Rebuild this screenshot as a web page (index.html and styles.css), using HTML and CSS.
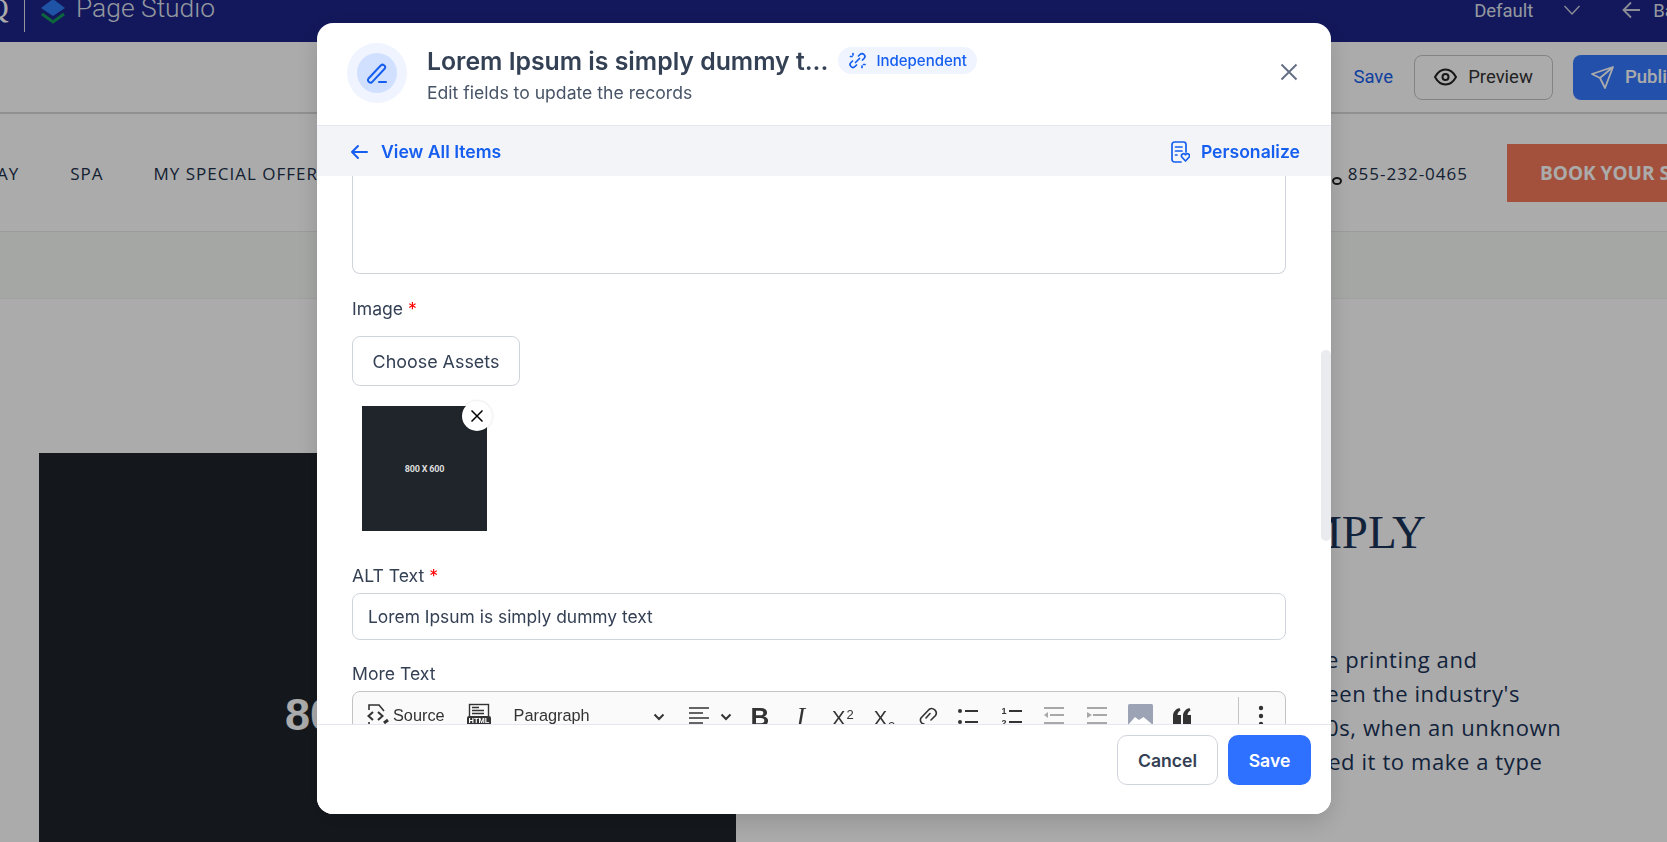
FILE: index.html
```html
<!DOCTYPE html>
<html>

<head>
    <meta charset="utf-8">
    <title>Page Studio</title>
    <link rel="stylesheet" href="styles.css">
</head>

<body>
    <div class="page">
        <div class="topbar">
            <div class="topbar-left">
                <span class="brand-q">Q</span>
                <span class="divider"></span>
                <svg class="logo" width="28" height="28" viewBox="0 0 28 28">
                    <path d="M14 2 L26 11 L14 19 L2 11 Z" fill="#2f7cf6" />
                    <path d="M3 17 L14 25 L25 17" fill="none" stroke="#129a5a" stroke-width="3" />
                </svg>
                <span class="brand-name">Page Studio</span>
            </div>
            <div class="topbar-right">
                <span>Default</span>
                <svg class="chev" width="16" height="16" viewBox="0 0 16 16" fill="none" stroke="#cfd3e0" stroke-width="1.4">
                    <path d="M0.500 3 L8 11 L15.500 3" />
                </svg>
                <svg class="back" width="20" height="20" viewBox="0 0 20 20" fill="none" stroke="#cfd3e0" stroke-width="1.8">
                    <path d="M19 10 H3 M10 2.500 L2.500 10 L10 17.500" />
                </svg>
                <span>Back</span>
            </div>
        </div>

        <div class="actionbar">
            <a class="save-link">Save</a>
            <button class="preview-btn">
                <svg width="23" height="18" viewBox="0 0 23 18" fill="none" stroke="#222" stroke-width="2">
                    <path d="M1 9 C4 3.500 7.500 1.500 11.500 1.500 C15.500 1.500 19 3.500 22 9 C19 14.500 15.500 16.500 11.500 16.500 C7.500 16.500 4 14.500 1 9 Z" />
                    <circle cx="11.500" cy="9" r="3" />
                </svg>
                Preview
            </button>
            <button class="publish-btn">
                <svg width="24" height="24" viewBox="0 0 24 24" fill="none" stroke="#fff" stroke-width="1.8" stroke-linejoin="round">
                    <path d="M23 2 L2 9 L10 13 L15 23 Z M23 2 L10 13" />
                </svg>
                Publish
            </button>
        </div>

        <div class="sitenav">
            <span class="nav-item nav-first">AY</span>
            <span class="nav-item nav-spa">SPA</span>
            <span class="nav-item nav-offer">MY SPECIAL OFFERS</span>
            <span class="nav-spacer"></span>
            <svg class="phone" width="18" height="28" viewBox="0 0 18 28" fill="none" stroke="#222" stroke-width="2">
                <ellipse cx="7" cy="21" rx="4" ry="3" />
            </svg>
            <span class="nav-phone">855-232-0465</span>
            <span class="book">BOOK YOUR STAY</span>
        </div>

        <div class="subbar"></div>

        <div class="hero">
            <div class="hero-img">
                <span>800 X 600</span>
            </div>
            <div class="hero-text">
                <h2>LOREM IPSUM IS SIMPLY</h2>
                <p>Lorem Ipsum is simply dummy text of the printing and<br>
                    typesetting industry. Lorem Ipsum has been the industry's<br>
                    standard dummy text ever since the 1500s, when an unknown<br>
                    printer took a galley of type and scrambled it to make a type</p>
            </div>
        </div>
    </div>

    <div class="overlay"></div>

    <div class="modal">
        <div class="modal-head">
            <div class="head-icon">
                <div class="head-icon-in">
                    <svg width="24" height="24" viewBox="0 0 24 24" fill="none" stroke="#155eef" stroke-width="2" stroke-linecap="round" stroke-linejoin="round">
                        <path d="M3.500 17.500 L15.500 4.800 A2.400 2.400 0 0 1 19.600 7.800 L7.500 20.600 A2.500 2.500 0 0 1 3.500 17.500 Z" />
                        <path d="M14 21 H21" />
                    </svg>
                </div>
            </div>
            <div class="head-text">
                <div class="head-title">
                    <h1>Lorem Ipsum is simply dummy t...</h1>
                    <span class="badge">
                        <svg width="17" height="17" viewBox="0 0 17 17" fill="none" stroke="#155eef" stroke-width="1.700" stroke-linecap="round">
                            <path d="M9.500 4 L11 2.500 A2.800 2.800 0 0 1 15 6.500 L13.500 8 M7.500 13 L6 14.500 A2.800 2.800 0 0 1 2 10.500 L3.500 9" />
                            <path d="M6.500 10.500 L10.500 6.500" />
                            <path d="M4 1.500 V3 M1.500 4.500 H3 M13 14 V15.500 M14.500 12.500 H16" />
                        </svg>
                        Independent
                    </span>
                </div>
                <p>Edit fields to update the records</p>
            </div>
            <svg class="close" width="20" height="20" viewBox="0 0 20 20" fill="none" stroke="#667085" stroke-width="2">
                <path d="M2.500 2.500 L17.500 17.500 M17.500 2.500 L2.500 17.500" />
            </svg>
        </div>

        <div class="modal-sub">
            <a class="sub-link">
                <svg width="20" height="20" viewBox="0 0 20 20" fill="none" stroke="#155eef" stroke-width="2" stroke-linecap="round" stroke-linejoin="round">
                    <path d="M18 10 H3 M9 4 L3 10 L9 16" />
                </svg>
                <span class="sub-gap sub-gap-wide">View All Items</span>
            </a>
            <a class="sub-link">
                <svg width="20" height="24" viewBox="-1 0 20 24" fill="none" stroke="#155eef" stroke-width="1.700" stroke-linecap="round" stroke-linejoin="round">
                    <path d="M15 12 V4.500 A2.500 2.500 0 0 0 12.500 2 H3.500 A2.500 2.500 0 0 0 1 4.500 V19.500 A2.500 2.500 0 0 0 3.500 22 H10" />
                    <path d="M4.500 7 H11 M4.500 11 H11 M4.500 15 H6" />
                    <path d="M14.500 21 L10.800 17 A2 2 0 0 1 14.500 14.800 A2 2 0 0 1 18.200 17 Z" />
                </svg>
                <span class="sub-gap">Personalize</span>
            </a>
        </div>

        <div class="modal-body">
            <div class="textarea-end"></div>

            <label class="field-label label-image">Image <em>*</em></label>
            <button class="choose-btn">Choose Assets</button>
            <div class="thumb">
                <span class="thumb-text">800 X 600</span>
                <span class="thumb-x">
                    <svg width="14" height="14" viewBox="0 0 14 14" fill="none" stroke="#000" stroke-width="1.500">
                        <path d="M1.500 1.500 L12.500 12.500 M12.500 1.500 L1.500 12.500" />
                    </svg>
                </span>
            </div>

            <label class="field-label label-alt">ALT Text <em>*</em></label>
            <div class="text-input">Lorem Ipsum is simply dummy text</div>

            <label class="field-label label-more">More Text</label>
            <div class="editor">
                <div class="tool tool-source">
                    <svg width="24" height="24" viewBox="0 0 24 24" fill="none" stroke="#333" stroke-width="1.600">
                        <path d="M3 7 V2 H13 L18 8" />
                        <path d="M7 9 L2.500 13 L7 17 M12 9 L16.500 13 L12 17" stroke-width="2" />
                        <path d="M3 19 V22 H15" />
                        <path d="M18 20 L22 17" stroke-width="3" />
                    </svg>
                    <span>Source</span>
                </div>
                <div class="tool tool-html">
                    <svg width="26" height="24" viewBox="0 0 26 24" fill="none" stroke="#333" stroke-width="1.400">
                        <rect x="3.500" y="1.500" width="19" height="13" />
                        <path d="M6 4.500 H13 M6 7.500 H18 M6 10.500 H18" />
                        <rect x="1" y="13" width="24" height="10" rx="2" fill="#333" stroke="none" />
                        <text x="13" y="20" class="html-mark">HTML</text>
                    </svg>
                </div>
                <div class="tool tool-para">
                    <span>Paragraph</span>
                    <svg class="caret" width="12" height="8" viewBox="0 0 12 8" fill="none" stroke="#333" stroke-width="2">
                        <path d="M1.500 1.500 L6 6 L10.500 1.500" />
                    </svg>
                </div>
                <div class="tool tool-align">
                    <svg width="22" height="24" viewBox="0 0 22 24" fill="none" stroke="#333" stroke-width="1.700">
                        <path d="M1 5 H21 M1 10 H15 M1 15 H21 M1 20 H15" />
                    </svg>
                    <svg class="caret" width="12" height="8" viewBox="0 0 12 8" fill="none" stroke="#333" stroke-width="2">
                        <path d="M1.500 1.500 L6 6 L10.500 1.500" />
                    </svg>
                </div>
                <span class="tool tool-b">B</span>
                <span class="tool tool-i">I</span>
                <span class="tool tool-sup">X<sup>2</sup></span>
                <span class="tool tool-sub">X<sub>2</sub></span>
                <div class="tool tool-link">
                    <svg width="22" height="24" viewBox="0 0 22 24" fill="none" stroke="#333" stroke-width="1.600" stroke-linecap="round">
                        <path d="M7 21 A4 4 0 0 1 4 15 L12 6.500 A4.500 4.500 0 0 1 18.500 12.500 L14 17" />
                        <path d="M9 15 L13 10.500" />
                    </svg>
                </div>
                <div class="tool tool-ul">
                    <svg width="22" height="24" viewBox="0 0 22 24" fill="#333" stroke="none">
                        <circle cx="3" cy="8" r="2" />
                        <circle cx="3" cy="19" r="2" />
                        <rect x="8" y="7" width="13" height="2" />
                        <rect x="8" y="18" width="13" height="2" />
                    </svg>
                </div>
                <div class="tool tool-ol">
                    <svg width="22" height="24" viewBox="0 0 22 24" fill="#333" stroke="none">
                        <text x="3" y="11" class="ol-mark">1</text>
                        <rect x="8" y="7" width="13" height="2" />
                        <text x="3" y="23" class="ol-mark">2</text>
                        <rect x="8" y="18" width="13" height="2" />
                    </svg>
                </div>
                <div class="tool tool-out">
                    <svg width="22" height="24" viewBox="0 0 22 24" fill="#a8a8a8" stroke="none">
                        <rect x="1" y="4" width="20" height="2" />
                        <path d="M1 12 L5 9 V15 Z" />
                        <rect x="7" y="11" width="14" height="2" />
                        <rect x="1" y="19" width="20" height="2" />
                    </svg>
                </div>
                <div class="tool tool-in">
                    <svg width="22" height="24" viewBox="0 0 22 24" fill="#a8a8a8" stroke="none">
                        <rect x="1" y="4" width="20" height="2" />
                        <path d="M6 12 L1 9 V15 Z" />
                        <rect x="7" y="11" width="14" height="2" />
                        <rect x="1" y="19" width="20" height="2" />
                    </svg>
                </div>
                <div class="tool tool-img">
                    <svg width="25" height="24" viewBox="0 0 25 24">
                        <rect x="0" y="1" width="25" height="23" rx="1.500" fill="#9ca3b4" />
                        <path d="M0 24 V22 L7 14 L11 17 L15.500 14 L25 22 V24 Z" fill="#fff" />
                    </svg>
                </div>
                <div class="tool tool-quote">
                    <svg width="20" height="24" viewBox="0 0 20 24" fill="#333">
                        <path d="M1 21 V13 C1 9 3.500 6 7.500 5 L8.500 7.500 C6.500 8.500 5.500 10 5.500 12 H9 V21 Z" />
                        <path d="M11 21 V13 C11 9 13.500 6 17.500 5 L18.500 7.500 C16.500 8.500 15.500 10 15.500 12 H19 V21 Z" />
                    </svg>
                </div>
                <span class="tool-sep"></span>
                <div class="tool tool-more">
                    <svg width="6" height="24" viewBox="0 0 6 24" fill="#333">
                        <circle cx="3" cy="5" r="2.200" />
                        <circle cx="3" cy="13" r="2.200" />
                        <circle cx="3" cy="21" r="2.200" />
                    </svg>
                </div>
            </div>
        </div>

        <div class="scroll-thumb"></div>

        <div class="modal-foot">
            <button class="btn-cancel">Cancel</button>
            <button class="btn-save">Save</button>
        </div>
    </div>
</body>

</html>
```

FILE: styles.css
```css
* {
    box-sizing: border-box;
}

html,
body {
    margin: 0;
    height: 100%;
    overflow: hidden;
}

body {
    font-family: Inter, "Liberation Sans", sans-serif;
    background-color: #fff;
}

button {
    font-family: inherit;
}

/* page behind the modal */
.page {
    width: 1667px;
    height: 842px;
    overflow: hidden;
}

.topbar {
    height: 42px;
    background-color: #1c2488;
    color: #dfe2ee;
    display: flex;
    justify-content: space-between;
    font-family: Roboto, sans-serif;
}

.topbar-left {
    display: flex;
    align-items: flex-start;
    margin-top: -12px;
}

.brand-q {
    font-family: "Liberation Serif", serif;
    font-size: 30px;
    color: #fff;
    margin-left: -13px;
    width: 37px;
    margin-top: 3px;
}

.divider {
    width: 1px;
    height: 44px;
    background-color: #dfe2ee;
}

.logo {
    margin: 9px 0 0 14px;
}

.brand-name {
    font-size: 26.4px;
    font-weight: 300;
    margin: 5px 0 0 9px;
}

.topbar-right {
    display: flex;
    align-items: flex-start;
    font-size: 18.5px;
    margin-right: -27px;
}

.topbar-right span {
    line-height: 22px;
}

.chev {
    margin: 3px 0 0 31px;
}

.back {
    margin: 0 12px 0 41px;
}

.actionbar {
    height: 72px;
    display: flex;
    justify-content: flex-end;
    align-items: center;
    border-bottom: 2px solid #d8d8d8;
    background-color: #fff;
    margin-right: -131px;
    font-family: Roboto, sans-serif;
    font-size: 18.5px;
}

.save-link {
    color: #155eef;
    margin-right: 21px;
}

.preview-btn {
    height: 45px;
    width: 139px;
    border: 1px solid #c4c4c4;
    border-radius: 8px;
    background-color: #fff;
    font-size: 18.5px;
    color: #333;
    display: flex;
    align-items: center;
    justify-content: center;
    gap: 11px;
    margin-right: 20px;
}

.publish-btn {
    height: 45px;
    width: 225px;
    border: none;
    border-radius: 8px;
    background-color: #3578ff;
    color: #fff;
    font-size: 18.5px;
    font-weight: 500;
    display: flex;
    align-items: center;
    padding-left: 17px;
    gap: 11px;
}

.sitenav {
    height: 118px;
    display: flex;
    align-items: center;
    padding-top: 2px;
    background-color: #fff;
    border-bottom: 1px solid #e8e8e8;
    font-family: "Open Sans", sans-serif;
    font-size: 17px;
    letter-spacing: 1px;
    color: #20304a;
    margin-right: -40px;
}

.nav-first {
    margin-left: -3px;
}

.nav-spa {
    margin-left: 51px;
}

.nav-offer {
    margin-left: 50px;
}

.nav-spacer {
    flex: 1;
}

.nav-phone {
    margin-right: 39px;
}

.book {
    width: 200px;
    height: 58px;
    margin-bottom: 1px;
    background-color: #f4795a;
    color: #fff;
    font-family: "Open Sans", sans-serif;
    font-weight: 700;
    font-size: 19px;
    letter-spacing: 0;
    display: flex;
    align-items: center;
    padding-left: 33px;
    white-space: nowrap;
    overflow: hidden;
}

.subbar {
    height: 67px;
    background-color: #f6faf6;
    border-bottom: 1px solid #f0f0f0;
}

.hero {
    display: flex;
    background-color: #fff;
    height: 543px;
    padding-top: 154px;
    overflow: hidden;
}

.hero-img {
    width: 697px;
    height: 523px;
    flex: none;
    margin-left: 39px;
    background-color: #1f252b;
    color: #fff;
    font-family: "Liberation Sans", sans-serif;
    font-weight: 700;
    font-size: 45px;
    display: flex;
    align-items: center;
    justify-content: center;
}

.hero-text {
    flex: 1;
    padding-left: 137px;
    color: #1a3358;
}

.hero-text h2 {
    font-family: "Liberation Serif", serif;
    font-weight: 400;
    font-size: 47px;
    margin: 52px 0 0 0;
    white-space: nowrap;
}

.hero-text p {
    font-family: "Open Sans", sans-serif;
    font-size: 22px;
    letter-spacing: 0.6px;
    line-height: 34px;
    margin: 83px 0 0 17px;
    white-space: nowrap;
}

.overlay {
    position: fixed;
    inset: 0;
    background-color: rgba(0, 0, 0, 0.33);
}

/* modal */
.modal {
    position: fixed;
    left: 317px;
    top: 23px;
    width: 1014px;
    height: 791px;
    background-color: #fff;
    border-radius: 16px;
    box-shadow: 0 8px 24px rgba(0, 0, 0, 0.15);
    display: flex;
    flex-direction: column;
    overflow: hidden;
}

.modal-head {
    height: 103px;
    flex: none;
    display: flex;
    align-items: center;
    padding: 0 32px 0 30px;
    border-bottom: 1px solid #e4e7ec;
}

.head-icon {
    width: 60px;
    height: 60px;
    border-radius: 50%;
    background-color: #eff4ff;
    display: flex;
    align-items: center;
    justify-content: center;
    margin: 0 20px 2px 0;
}

.head-icon-in {
    width: 40px;
    height: 40px;
    border-radius: 50%;
    background-color: #d1e0ff;
    display: flex;
    align-items: center;
    justify-content: center;
}

.head-text {
    flex: 1;
    padding-top: 2px;
}

.head-title {
    display: flex;
    align-items: center;
    gap: 10px;
}

.head-title h1 {
    margin: 0;
    font-size: 24.8px;
    font-weight: 600;
    line-height: 32px;
    color: #344054;
}

.badge {
    display: flex;
    align-items: center;
    gap: 10px;
    height: 27px;
    margin-bottom: 2px;
    padding: 0 10px 0 11px;
    border-radius: 14px;
    background-color: #eff4ff;
    color: #155eef;
    font-size: 15px;
    font-weight: 500;
}

.head-text p {
    margin: 4px 0 0 0;
    font-size: 17.6px;
    line-height: 24px;
    color: #475467;
}

.close {
    margin-bottom: 5px;
}

.modal-sub {
    height: 50px;
    flex: none;
    display: flex;
    align-items: center;
    justify-content: space-between;
    padding: 1px 31px 0 32px;
    background-color: #f2f4f7;
}

.sub-link {
    display: flex;
    align-items: center;
    color: #155eef;
    font-size: 17.6px;
    font-weight: 600;
}

.sub-gap {
    margin-left: 11px;
}

.sub-gap-wide {
    margin-left: 12px;
}

.modal-body {
    flex: 1;
    overflow: hidden;
    padding: 0 45px 0 35px;
}

.textarea-end {
    height: 98px;
    border: 1px solid #d0d5dd;
    border-top: none;
    border-radius: 0 0 8px 8px;
}

.field-label {
    display: block;
    font-size: 17.6px;
    line-height: 24px;
    color: #344054;
}

.field-label em {
    font-style: normal;
    color: #f00;
}

.label-image {
    margin-top: 23px;
}

.choose-btn {
    display: block;
    margin-top: 15px;
    width: 168px;
    height: 50px;
    border: 1px solid #d0d5dd;
    border-radius: 8px;
    background-color: #fff;
    font-size: 17.9px;
    color: #344054;
}

.thumb {
    position: relative;
    width: 125px;
    height: 125px;
    margin: 20px 0 0 10px;
    background-color: #1f252b;
    color: #ddd;
    display: flex;
    align-items: center;
    justify-content: center;
}

.thumb-text {
    font-family: Roboto, sans-serif;
    font-size: 9px;
    font-weight: 700;
    letter-spacing: -0.2px;
}

.thumb-x {
    position: absolute;
    right: -5px;
    top: -5px;
    width: 30px;
    height: 30px;
    border-radius: 50%;
    background-color: #fff;
    box-shadow: 0 0 3px rgba(0, 0, 0, 0.15);
    display: flex;
    align-items: center;
    justify-content: center;
}

.label-alt {
    margin-top: 33px;
}

.text-input {
    margin-top: 5px;
    height: 47px;
    border: 1px solid #d0d5dd;
    border-radius: 8px;
    padding: 0 15px;
    display: flex;
    align-items: center;
    font-size: 17.4px;
    color: #344054;
}

.label-more {
    margin-top: 22px;
}

.editor {
    margin-top: 5px;
    height: 50px;
    background-color: #fafafa;
    border: 1px solid #c4c4c4;
    border-radius: 8px 8px 0 0;
    display: flex;
    align-items: flex-start;
    color: #333;
}

.tool {
    display: flex;
    align-items: center;
    gap: 3px;
    height: 24px;
    margin-top: 11px;
    flex: none;
}

.caret {
    margin-top: 4px;
}

.html-mark {
    font-family: "Liberation Sans", sans-serif;
    font-size: 7.5px;
    font-weight: 700;
    fill: #fff;
    stroke: none;
    text-anchor: middle;
}

.ol-mark {
    font-family: "Liberation Sans", sans-serif;
    font-size: 9px;
    font-weight: 700;
    text-anchor: middle;
}

.tool-source {
    margin-left: 13px;
    font-family: "Liberation Sans", sans-serif;
    font-size: 16.3px;
}

.tool-html {
    margin-left: 21px;
}

.tool-para {
    margin-left: 22px;
    width: 151px;
    justify-content: space-between;
    font-family: "Liberation Sans", sans-serif;
    font-size: 16.3px;
}

.tool-align {
    margin-left: 23px;
    gap: 10px;
}

.tool-b {
    margin-left: 19px;
    padding-top: 5px;
    font-family: "Liberation Sans", sans-serif;
    font-size: 26px;
    font-weight: 700;
}

.tool-i {
    margin-left: 27px;
    padding-top: 4px;
    font-family: "Liberation Serif", serif;
    font-style: italic;
    font-size: 26px;
}

.tool-sup,
.tool-sub {
    display: block;
    padding-top: 3px;
    font-family: "Liberation Sans", sans-serif;
    font-size: 20px;
    line-height: 24px;
}

.tool-sup {
    margin-left: 27px;
}

.tool-sub {
    margin-left: 20px;
}

.tool-sup sup,
.tool-sub sub {
    font-size: 13px;
    line-height: 0;
    margin-left: 1px;
}

.tool-sup sup {
    vertical-align: 6px;
}

.tool-sub sub {
    vertical-align: -6px;
}

.tool-link {
    margin-left: 22px;
}

.tool-ul {
    margin-left: 18px;
}

.tool-ol {
    margin-left: 22px;
}

.tool-out {
    margin-left: 20px;
}

.tool-in {
    margin-left: 21px;
}

.tool-img {
    margin-left: 20px;
}

.tool-quote {
    margin-left: 19px;
}

.tool-sep {
    width: 1px;
    height: 40px;
    margin: 5px 0 0 46px;
    background-color: #c4c4c4;
}

.tool-more {
    margin-left: 19px;
}

.scroll-thumb {
    position: absolute;
    right: 0;
    top: 327px;
    width: 10px;
    height: 191px;
    border-radius: 5px;
    background-color: #eaebef;
}

.modal-foot {
    height: 90px;
    flex: none;
    display: flex;
    justify-content: flex-end;
    gap: 10px;
    padding: 10px 20px 0 0;
    border-top: 1px solid #e4e7ec;
    background-color: #fff;
}

.btn-cancel,
.btn-save {
    height: 50px;
    border-radius: 10px;
    font-size: 17.6px;
    font-weight: 600;
}

.btn-cancel {
    width: 101px;
    background-color: #fff;
    border: 1px solid #d0d5dd;
    color: #344054;
}

.btn-save {
    width: 83px;
    background-color: #2e70ff;
    border: none;
    color: #fff;
}
```
